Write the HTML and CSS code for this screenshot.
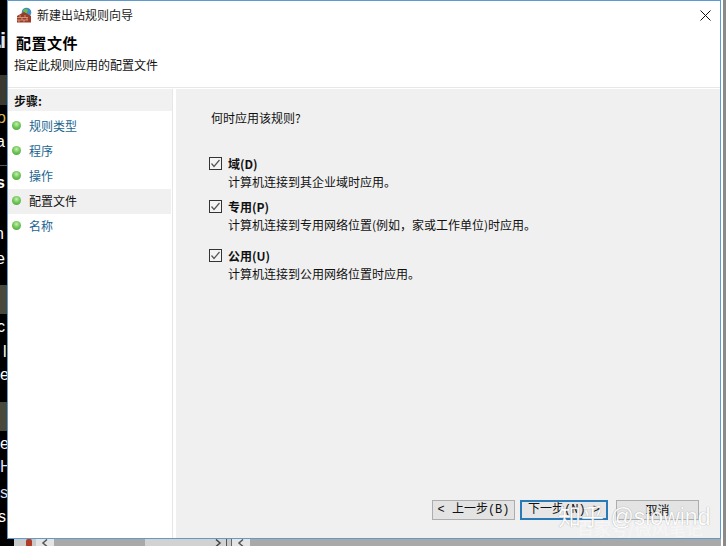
FILE: index.html
```html
<!DOCTYPE html>
<html lang="zh">
<head>
<meta charset="utf-8">
<title>新建出站规则向导</title>
<link rel="stylesheet" href="styles.css">
</head>
<body>
<div class="desktop">
  <div class="bg-strip">
    <span class="frag frag-i">.i</span>
    <span class="band band-1"></span>
    <span class="frag frag-o">o</span>
    <span class="frag frag-a">a</span>
    <span class="band band-2"></span>
    <span class="frag frag-s">s</span>
    <span class="frag frag-n">n</span>
    <span class="frag frag-e1">e</span>
    <span class="band band-3"></span>
    <span class="frag frag-c">c</span>
    <span class="frag frag-l">l</span>
    <span class="frag frag-e2">e</span>
    <span class="band band-4"></span>
    <span class="frag frag-e3">e</span>
    <span class="frag frag-h">H</span>
    <span class="frag frag-s2">s</span>
    <span class="frag frag-s3">s</span>
  </div>
  <div class="bottom-bar">
    <svg class="red-icon" width="8" height="8" viewBox="0 0 8 8"><rect x="1" y="0" width="6" height="8" rx="2" fill="#b23a26"/></svg>
    <div class="scroll scroll-a">
      <span class="arrow"><svg width="8" height="7" viewBox="0 0 8 7"><path d="M6 0.500L2 4L6 7.500" stroke="#555" stroke-width="1.500" fill="none"/></svg></span>
      <span class="thumb"></span>
      <span class="track-light"></span>
      <span class="arrow arrow-plain"><svg width="8" height="7" viewBox="0 0 8 7"><path d="M2 0.500L6 4L2 7.500" stroke="#444" stroke-width="1.500" fill="none"/></svg></span>
    </div>
    <div class="scroll scroll-b">
      <span class="arrow"><svg width="8" height="7" viewBox="0 0 8 7"><path d="M6 0.500L2 4L6 7.500" stroke="#555" stroke-width="1.500" fill="none"/></svg></span>
      <span class="thumb thumb-b"></span>
    </div>
  </div>
  <div class="right-edge"></div>

  <main class="window">
    <header class="titlebar">
      <svg class="app-icon" width="17" height="17" viewBox="0 0 17 17">
        <circle cx="10.500" cy="5.500" r="4.800" fill="#3f8fc4"/>
        <path d="M7 3.500 C9 1 11 2 12 3 L11 6 L8.500 6 Z" fill="#6dbb45"/>
        <path d="M1 9 L8 5 L15 9 V15.500 H1 Z" fill="#9c3b26"/>
        <path d="M1 10.500H12M1 13H12M4 8V10.500M9 8V10.500M6 10.500V13M11 10.500V13M3 13V15.500M8 13V15.500" stroke="#d9a88e" stroke-width="0.800" fill="none"/>
      </svg>
      <span class="title-text">新建出站规则向导</span>
      <svg class="close" width="11" height="11" viewBox="0 0 11 11"><path d="M0.500 0.500L10.500 10.500M10.500 0.500L0.500 10.500" stroke="#111" stroke-width="1" fill="none"/></svg>
    </header>
    <section class="heading">
      <h1 class="heading-title">配置文件</h1>
      <p class="heading-sub">指定此规则应用的配置文件</p>
    </section>
    <div class="body">
      <nav class="steps">
        <div class="steps-title">步骤:</div>
        <ul class="step-list">
          <li class="step"><i class="dot"></i><span>规则类型</span></li>
          <li class="step"><i class="dot"></i><span>程序</span></li>
          <li class="step"><i class="dot"></i><span>操作</span></li>
          <li class="step step-current"><i class="dot"></i><span>配置文件</span></li>
          <li class="step"><i class="dot"></i><span>名称</span></li>
        </ul>
      </nav>
      <div class="panel">
        <p class="question">何时应用该规则?</p>
        <div class="options">
          <div class="option option-d">
            <svg class="check" width="13" height="13" viewBox="0 0 13 13"><rect x="0.500" y="0.500" width="12" height="12" fill="#f4f4f4" stroke="#333"/><path d="M2.500 6.500L5 9.500L10.500 3" stroke="#555" stroke-width="1.200" fill="none"/></svg>
            <div><div class="opt-name">域(D)</div><div class="opt-desc">计算机连接到其企业域时应用。</div></div>
          </div>
          <div class="option option-p">
            <svg class="check" width="13" height="13" viewBox="0 0 13 13"><rect x="0.500" y="0.500" width="12" height="12" fill="#f4f4f4" stroke="#333"/><path d="M2.500 6.500L5 9.500L10.500 3" stroke="#555" stroke-width="1.200" fill="none"/></svg>
            <div><div class="opt-name">专用(P)</div><div class="opt-desc">计算机连接到专用网络位置(例如，家或工作单位)时应用。</div></div>
          </div>
          <div class="option option-u">
            <svg class="check" width="13" height="13" viewBox="0 0 13 13"><rect x="0.500" y="0.500" width="12" height="12" fill="#f4f4f4" stroke="#333"/><path d="M2.500 6.500L5 9.500L10.500 3" stroke="#555" stroke-width="1.200" fill="none"/></svg>
            <div><div class="opt-name">公用(U)</div><div class="opt-desc">计算机连接到公用网络位置时应用。</div></div>
          </div>
        </div>
        <div class="buttons">
          <button class="btn">&lt; 上一步(B)</button>
          <button class="btn btn-default">下一步(N) &gt;</button>
          <button class="btn btn-cancel">取消</button>
        </div>
      </div>
    </div>
  </main>

  <div class="watermark">
    <div class="wm-main">知乎 @slowind</div>
    <div class="wm-sub">百家号/微风笔记</div>
  </div>
</div>
</body>
</html>
```
FILE: styles.css
```css
* { box-sizing: border-box; }
html, body { margin: 0; padding: 0; }
body {
  width: 728px;
  height: 546px;
  overflow: hidden;
  font-family: "Noto Sans CJK SC", "Liberation Sans", sans-serif;
  font-size: 12px;
  color: #111;
}
.desktop {
  position: relative;
  width: 728px;
  height: 546px;
  background: #000;
  overflow: hidden;
}
.bg-strip { position: absolute; left: 0; top: 0; width: 8px; height: 546px; background: #000; }
.band { position: absolute; left: 0; width: 8px; }
.band-1 { top: 75px; height: 30px; background: #3a3a30; }
.band-2 { top: 165px; height: 1px; background: #555; }
.band-3 { top: 285px; height: 29px; background: #4a4a3c; }
.band-4 { top: 402px; height: 29px; background: #4a4a3c; }
.frag {
  position: absolute;
  color: #fff;
  font-family: "Liberation Sans", sans-serif;
  font-size: 16px;
  line-height: 18px;
  width: 8px;
  overflow: hidden;
}
.frag-i { top: 29px; left: -4px; width: 11px; font-size: 22px; font-weight: 700; line-height: 24px; letter-spacing: -2px; color: #dfe6ee; }
.frag-o { top: 109px; left: -3px; color: #d8b24a; width: 10px; }
.frag-a { top: 133px; left: -4px; width: 11px; }
.frag-s { top: 174px; left: -4px; width: 11px; font-weight: 700; }
.frag-n { top: 225px; left: -5px; width: 12px; }
.frag-e1 { top: 250px; left: -4px; width: 11px; }
.frag-c { top: 318px; left: -3px; width: 10px; }
.frag-l { top: 343px; left: 3px; width: 4px; }
.frag-e2 { top: 366px; left: 0; width: 7px; }
.frag-e3 { top: 435px; left: 0; width: 7px; }
.frag-h { top: 458px; left: 0; width: 7px; color: #dde4ff; }
.frag-s2 { top: 484px; left: 0; width: 7px; color: #dde; }
.frag-s3 { top: 508px; left: -2px; width: 9px; }

.bottom-bar {
  position: absolute;
  left: 14px;
  right: 0;
  bottom: 0;
  height: 7px;
  background: #c9c9c9;
  display: flex;
  align-items: flex-start;
}
.red-icon { margin: 0 0 0 11px; }
.scroll { display: flex; align-items: center; height: 7px; overflow: hidden; }
.scroll-a { width: 191px; margin-left: 3px; }
.scroll-b { flex: 1; margin-left: 4px; border-left: 1px solid #666; }
.arrow { flex: none; width: 18px; height: 7px; display: flex; justify-content: center; background: #e4e4e4; }
.arrow-plain { background: #d2d2d2; border-right: 1px solid #555; }
.thumb { flex: none; width: 91px; height: 7px; background: #a9a9a9; }
.track-light { flex: 1; height: 7px; background: #d2d2d2; }
.thumb-b { flex: 1; }

.right-edge {
  position: absolute;
  right: 0;
  top: 0;
  width: 7px;
  height: 546px;
  background: linear-gradient(to right, #fff 0, #fff 2px, #8a8a8a 2px, #8a8a8a 5px, #fff 5px);
}

.window {
  position: absolute;
  left: 7px;
  top: 0;
  width: 714px;
  height: 539px;
  background: #fff;
  border: 1px solid #5f9ccb;
  display: flex;
  flex-direction: column;
}
.titlebar { display: flex; align-items: center; height: 29px; padding: 0 9px 0 8px; flex: none; }
.app-icon { margin-right: 4px; }
.title-text { font-size: 12px; line-height: 16px; margin-bottom: 1px; color: #222; flex: 1; }
.heading { height: 57px; padding-left: 6px; flex: none; }
.heading-title { margin: 3px 0 0 2px; font-size: 15px; line-height: 20px; font-weight: 700; color: #000; letter-spacing: .5px; }
.heading-sub { margin: 3px 0 0; font-size: 12px; line-height: 18px; color: #111; }
.body { flex: 1; display: flex; min-height: 0; border-top: 1px solid #e8e8e8; padding-top: 1px; }
.steps { width: 165px; flex: none; background: #fff; border-right: 1px solid #e6e6e6; }
.steps-title { height: 22px; line-height: 23px; padding-left: 6px; background: #f1f1f1; font-weight: 700; color: #111; }
.step-list { list-style: none; margin: 0; padding: 3px 0 0; }
.step { display: flex; align-items: center; height: 25px; padding: 0 0 2px 4px; color: #1a6490; margin-right: 1px; }
.step span { margin-left: 8px; }
.step-current { background: #f0f0f0; color: #111; }
.dot {
  width: 9px; height: 9px; border-radius: 50%; flex: none;
  background: radial-gradient(circle at 50% 35%, #c8f0b0 0, #72c75a 45%, #3f9c35 100%);
}
.panel {
  flex: 1;
  margin-left: 3px;
  background: #f0f0f0;
  padding: 20px 0 0 35px;
  display: flex;
  flex-direction: column;
  min-width: 0;
}
.question { margin: 0; font-size: 12px; line-height: 18px; color: #111; }
.options { margin-top: 28px; }
.option { display: flex; gap: 6px; }
.check { flex: none; margin: 2px 0 0 -2px; }
.opt-name { font-weight: 700; line-height: 18px; color: #111; }
.opt-desc { line-height: 18px; color: #111; }
.option-p { margin-top: 7px; }
.option-u { margin-top: 13px; }
.buttons { margin-top: auto; margin-bottom: 18px; padding-left: 221px; display: flex; }
.btn {
  width: 83px; height: 20px; padding: 0; margin: 0;
  font: 12px "Liberation Mono", "Noto Sans CJK SC", sans-serif;
  line-height: 16px;
  color: #111;
  background: #e3e3e3;
  border: 1px solid #adadad;
  margin-right: 5px;
}
.btn-default { width: 88px; border: 2px solid #2a7ab8; background: #e6e6e6; margin-right: 8px; }
.btn-cancel { font-family: "Noto Sans CJK SC", sans-serif; }
.watermark {
  position: absolute;
  left: 558px;
  top: 503px;
  width: 170px;
  color: #fff;
  pointer-events: none;
}
.wm-main { font-family: "Liberation Sans", "Noto Sans CJK SC", sans-serif; font-size: 23px; line-height: 28px; white-space: nowrap; opacity: .9; text-shadow: 0 0 1px #888; }
.wm-sub { margin: -14px 0 0 19px; font-size: 17px; line-height: 22px; opacity: .4; white-space: nowrap; }
```
